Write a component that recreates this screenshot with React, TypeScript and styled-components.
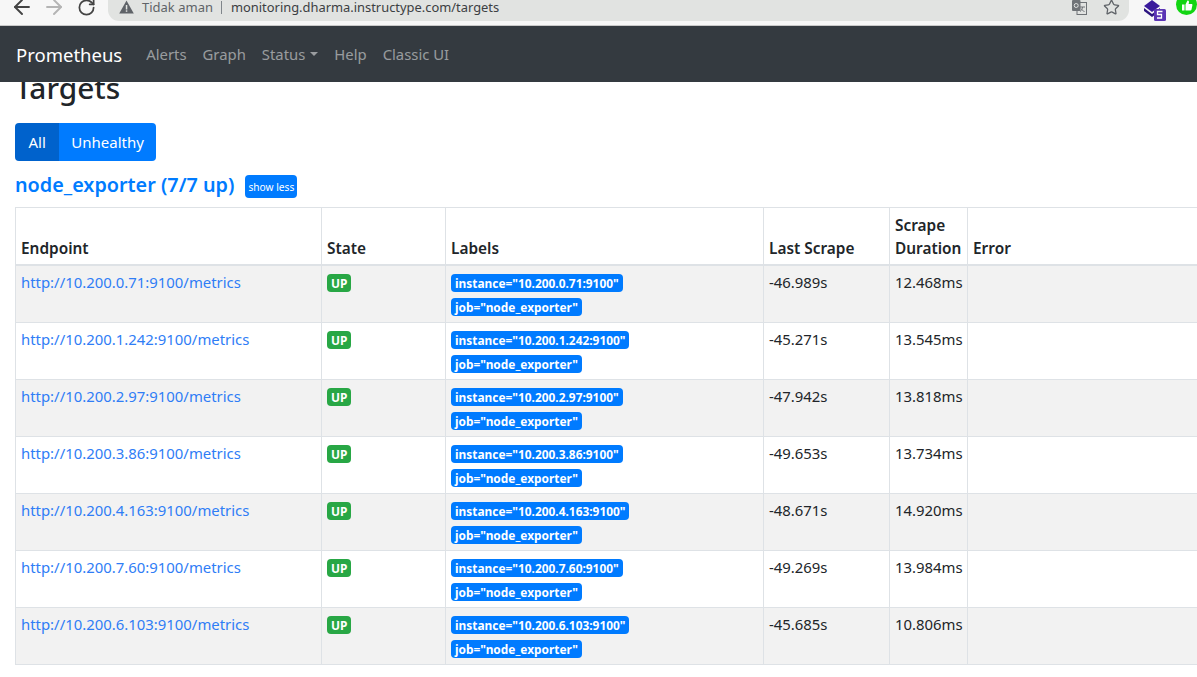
import { FC } from 'react'
import styled, { createGlobalStyle } from 'styled-components'
import { ArrowLeft, ArrowRight, RotateCw, Star } from 'lucide-react'

// ========================================================================
// Style
// ========================================================================

const GlobalStyle = createGlobalStyle`
  html, body {
    margin: 0;
    height: 100%;
    overflow: hidden;
    background: #fff;
  }
  body {
    font-family: "Noto Sans", "Open Sans", sans-serif;
    color: #212529;
  }
`

const Page = styled.div`
  width: 1197px;
  height: 677px;
  overflow: hidden;
`

const Chrome = styled.div`
  height: 25px;
  display: flex;
  align-items: flex-start;
  background: #f7f7f7;
  border-bottom: 1px solid #c9c9c9;
  position: relative;
  z-index: 3;
  overflow: hidden;
`

const NavIcons = styled.div`
  display: flex;
  height: 14px;
  padding-left: 6px;
  margin-right: 6px;
  flex: none;
`

const NavIcon = styled.span<{ $color: string }>`
  width: 32px;
  height: 14px;
  display: flex;
  align-items: center;
  justify-content: center;
  color: ${(p) => p.$color};

  svg {
    flex: none;
  }
`

const Omnibox = styled.div`
  width: 1021px;
  height: 21px;
  border-radius: 0 0 11px 11px;
  background: #e1e3e1;
  display: flex;
  align-items: center;
  padding: 0 9px 7px 11px;
  box-sizing: border-box;
  font-size: 13px;
  line-height: 14px;
  flex: none;
`

const Insecure = styled.span`
  color: #5f6368;
  margin-left: 8px;
`

const Divider = styled.span`
  width: 1px;
  height: 13px;
  background: #80868b;
  margin: 0 9px 0 8px;
`

const Url = styled.span`
  color: #3c4043;
  font-size: 12.9px;
`

const OmniRight = styled.div`
  margin-left: auto;
  display: flex;
  align-items: center;
  gap: 16px;
  color: #5f6368;
`

const Extensions = styled.div`
  display: flex;
  align-items: flex-start;
  gap: 10px;
  margin-left: 15px;
`

const Navbar = styled.nav`
  height: 56px;
  display: flex;
  align-items: center;
  background: #343a40;
  padding: 0 16px;
  position: relative;
  z-index: 2;
`

const Brand = styled.a`
  font-size: 18.5px;
  color: #fff;
  margin-right: 24px;
`

const NavLink = styled.a`
  font-size: 14.85px;
  color: rgba(255, 255, 255, 0.5);
  margin-right: 16px;
  display: flex;
  align-items: center;
`

const Caret = styled.span`
  display: inline-block;
  margin-left: 5px;
  border-top: 4.5px solid rgba(255, 255, 255, 0.5);
  border-left: 4.5px solid transparent;
  border-right: 4.5px solid transparent;
`

const Content = styled.main`
  padding: 0 0 0 15px;
`

const Title = styled.h1`
  margin: -13px 0 0;
  font-size: 29.8px;
  font-weight: 500;
  line-height: 38px;
  color: #212529;
`

const BtnGroup = styled.div`
  display: inline-flex;
  margin-top: 16px;
  vertical-align: top;
`

const GroupBtn = styled.button<{ $active?: boolean }>`
  height: 38px;
  border: 0;
  padding: 0 ${(p) => (p.$active ? '13.5px' : '12px')};
  font-family: inherit;
  font-size: 15px;
  color: #fff;
  background: ${(p) => (p.$active ? '#0062cc' : '#007bff')};
  border-radius: ${(p) => (p.$active ? '4px 0 0 4px' : '0 4px 4px 0')};
`

const JobRow = styled.div`
  display: flex;
  align-items: center;
  height: 24px;
  margin-top: 11px;
`

const JobName = styled.a`
  font-size: 19.8px;
  font-weight: 600;
  color: #007bff;
  white-space: nowrap;
`

const ShowLess = styled.button`
  margin-left: 11px;
  margin-top: 5px;
  width: 52px;
  height: 23px;
  padding: 1px 0 0;
  border: 0;
  border-radius: 4px;
  font-family: inherit;
  font-size: 10.2px;
  color: #fff;
  background: #007bff;
`

const Table = styled.table`
  width: 1300px;
  margin-top: 11px;
  table-layout: fixed;
  border-collapse: collapse;
  font-size: 14.9px;
`

const Th = styled.th<{ $w: number }>`
  width: ${(p) => p.$w}px;
  box-sizing: border-box;
  padding: 6px 5px 4px;
  text-align: left;
  vertical-align: bottom;
  font-size: 15.4px;
  font-weight: 600;
  line-height: 23px;
  border: 1px solid #dee2e6;
  border-bottom: 2px solid #dee2e6;
`

const Row = styled.tr`
  height: 57px;

  &:nth-child(odd) {
    background: #f2f2f2;
  }
`

const Td = styled.td`
  box-sizing: border-box;
  padding: 4px 5px 5px;
  vertical-align: top;
  line-height: 24px;
  border: 1px solid #dee2e6;
`

const Endpoint = styled.a`
  color: #2f7df6;
`

const Badge = styled.span<{ $color: string }>`
  display: inline-block;
  height: 18px;
  line-height: 18px;
  padding: 0 4px;
  font-size: 11.9px;
  font-weight: 700;
  color: #fff;
  border-radius: 4px;
  white-space: nowrap;
  background: ${(p) => p.$color};
  vertical-align: top;
`

const StateCell = styled.div`
  padding-top: 4px;
  line-height: 0;
`

const LabelStack = styled.div`
  display: flex;
  flex-direction: column;
  align-items: flex-start;
  gap: 6px;
  padding-top: 4px;
`

// ========================================================================
// Data
// ========================================================================

const targets = [
  { host: '10.200.0.71:9100', last: '-46.989s', duration: '12.468ms' },
  { host: '10.200.1.242:9100', last: '-45.271s', duration: '13.545ms' },
  { host: '10.200.2.97:9100', last: '-47.942s', duration: '13.818ms' },
  { host: '10.200.3.86:9100', last: '-49.653s', duration: '13.734ms' },
  { host: '10.200.4.163:9100', last: '-48.671s', duration: '14.920ms' },
  { host: '10.200.7.60:9100', last: '-49.269s', duration: '13.984ms' },
  { host: '10.200.6.103:9100', last: '-45.685s', duration: '10.806ms' },
]

// ========================================================================
// View
// ========================================================================

const WarningIcon: FC = () => (
  <svg width="15" height="14" viewBox="0 0 15 14">
    <path d="M7.5 0.5 L14.8 13.5 H0.2 Z" fill="#5f6368" />
    <rect x="6.8" y="5" width="1.5" height="4.5" fill="#e1e3e1" />
    <rect x="6.8" y="10.3" width="1.5" height="1.5" fill="#e1e3e1" />
  </svg>
)

const TranslateIcon: FC = () => (
  <svg width="15" height="15" viewBox="0 0 15 15">
    <rect x="5" y="2.5" width="9.5" height="12" fill="#e1e3e1" stroke="#6f7377" />
    <rect x="0" y="0" width="8.5" height="11" rx="1" fill="#6f7377" />
    <circle cx="4.2" cy="5.5" r="2" fill="none" stroke="#e1e3e1" strokeWidth="1" />
    <path d="M8 7h5M10.5 7c0 2-1 3.5-2.5 4.5M9 8.5c.8 1.500 2 2.500 3.500 3" fill="none" stroke="#6f7377" />
  </svg>
)

const StackExtension: FC = () => (
  <svg width="22" height="22" viewBox="0 0 22 22">
    <path d="M0 6 L8 0 L16 6 L8 12 Z" fill="#3a1a9c" />
    <path d="M0 8 L8 14 L16 8 V11 L8 17 L0 11 Z" fill="#2c1480" />
    <rect x="10" y="9" width="12" height="12" rx="1.500" fill="#5b34b5" />
    <path d="M18.500 11.500h-5v3h4v3.500h-4.500" fill="none" stroke="#fff" strokeWidth="1.300" />
  </svg>
)

const ThumbExtension: FC = () => (
  <svg width="21" height="16" viewBox="0 0 21 16">
    <circle cx="10.500" cy="4.500" r="10.500" fill="#12d512" />
    <path d="M6 4.500h2.500v6H6z M9.500 10.500V4.500l2-4c1 0 1.500 .7 1.500 1.700L12.600 4H15.500c.7 0 1 .6 .9 1.200l-.9 4.300c-.1 .6-.5 1-1.100 1z" fill="#fff" />
  </svg>
)

export default function App() {
  return (
    <Page>
      <GlobalStyle />

      <Chrome>
        <NavIcons>
          <NavIcon $color="#444">
            <ArrowLeft size={24} strokeWidth={1.9} />
          </NavIcon>
          <NavIcon $color="#b4b4b4">
            <ArrowRight size={24} strokeWidth={1.9} />
          </NavIcon>
          <NavIcon $color="#444">
            <RotateCw size={19} strokeWidth={2.2} />
          </NavIcon>
        </NavIcons>
        <Omnibox>
          <WarningIcon />
          <Insecure>Tidak aman</Insecure>
          <Divider />
          <Url>monitoring.dharma.instructype.com/targets</Url>
          <OmniRight>
            <TranslateIcon />
            <Star size={17} strokeWidth={1.8} />
          </OmniRight>
        </Omnibox>
        <Extensions>
          <StackExtension />
          <ThumbExtension />
        </Extensions>
      </Chrome>

      <Navbar>
        <Brand>Prometheus</Brand>
        <NavLink>Alerts</NavLink>
        <NavLink>Graph</NavLink>
        <NavLink>
          Status
          <Caret />
        </NavLink>
        <NavLink>Help</NavLink>
        <NavLink>Classic UI</NavLink>
      </Navbar>

      <Content>
        <Title>Targets</Title>
        <BtnGroup>
          <GroupBtn $active>All</GroupBtn>
          <GroupBtn>Unhealthy</GroupBtn>
        </BtnGroup>

        <JobRow>
          <JobName>node_exporter (7/7 up)</JobName>
          <ShowLess>show less</ShowLess>
        </JobRow>

        <Table>
          <thead>
            <tr>
              <Th $w={306}>Endpoint</Th>
              <Th $w={124}>State</Th>
              <Th $w={318}>Labels</Th>
              <Th $w={126}>Last Scrape</Th>
              <Th $w={78}>
                Scrape
                <br />
                Duration
              </Th>
              <Th $w={348}>Error</Th>
            </tr>
          </thead>
          <tbody>
            {targets.map((t) => (
              <Row key={t.host}>
                <Td>
                  <Endpoint>{`http://${t.host}/metrics`}</Endpoint>
                </Td>
                <Td>
                  <StateCell>
                    <Badge $color="#28a745">UP</Badge>
                  </StateCell>
                </Td>
                <Td>
                  <LabelStack>
                    <Badge $color="#007bff">{`instance="${t.host}"`}</Badge>
                    <Badge $color="#007bff">job="node_exporter"</Badge>
                  </LabelStack>
                </Td>
                <Td>{t.last}</Td>
                <Td>{t.duration}</Td>
                <Td />
              </Row>
            ))}
          </tbody>
        </Table>
      </Content>
    </Page>
  )
}
